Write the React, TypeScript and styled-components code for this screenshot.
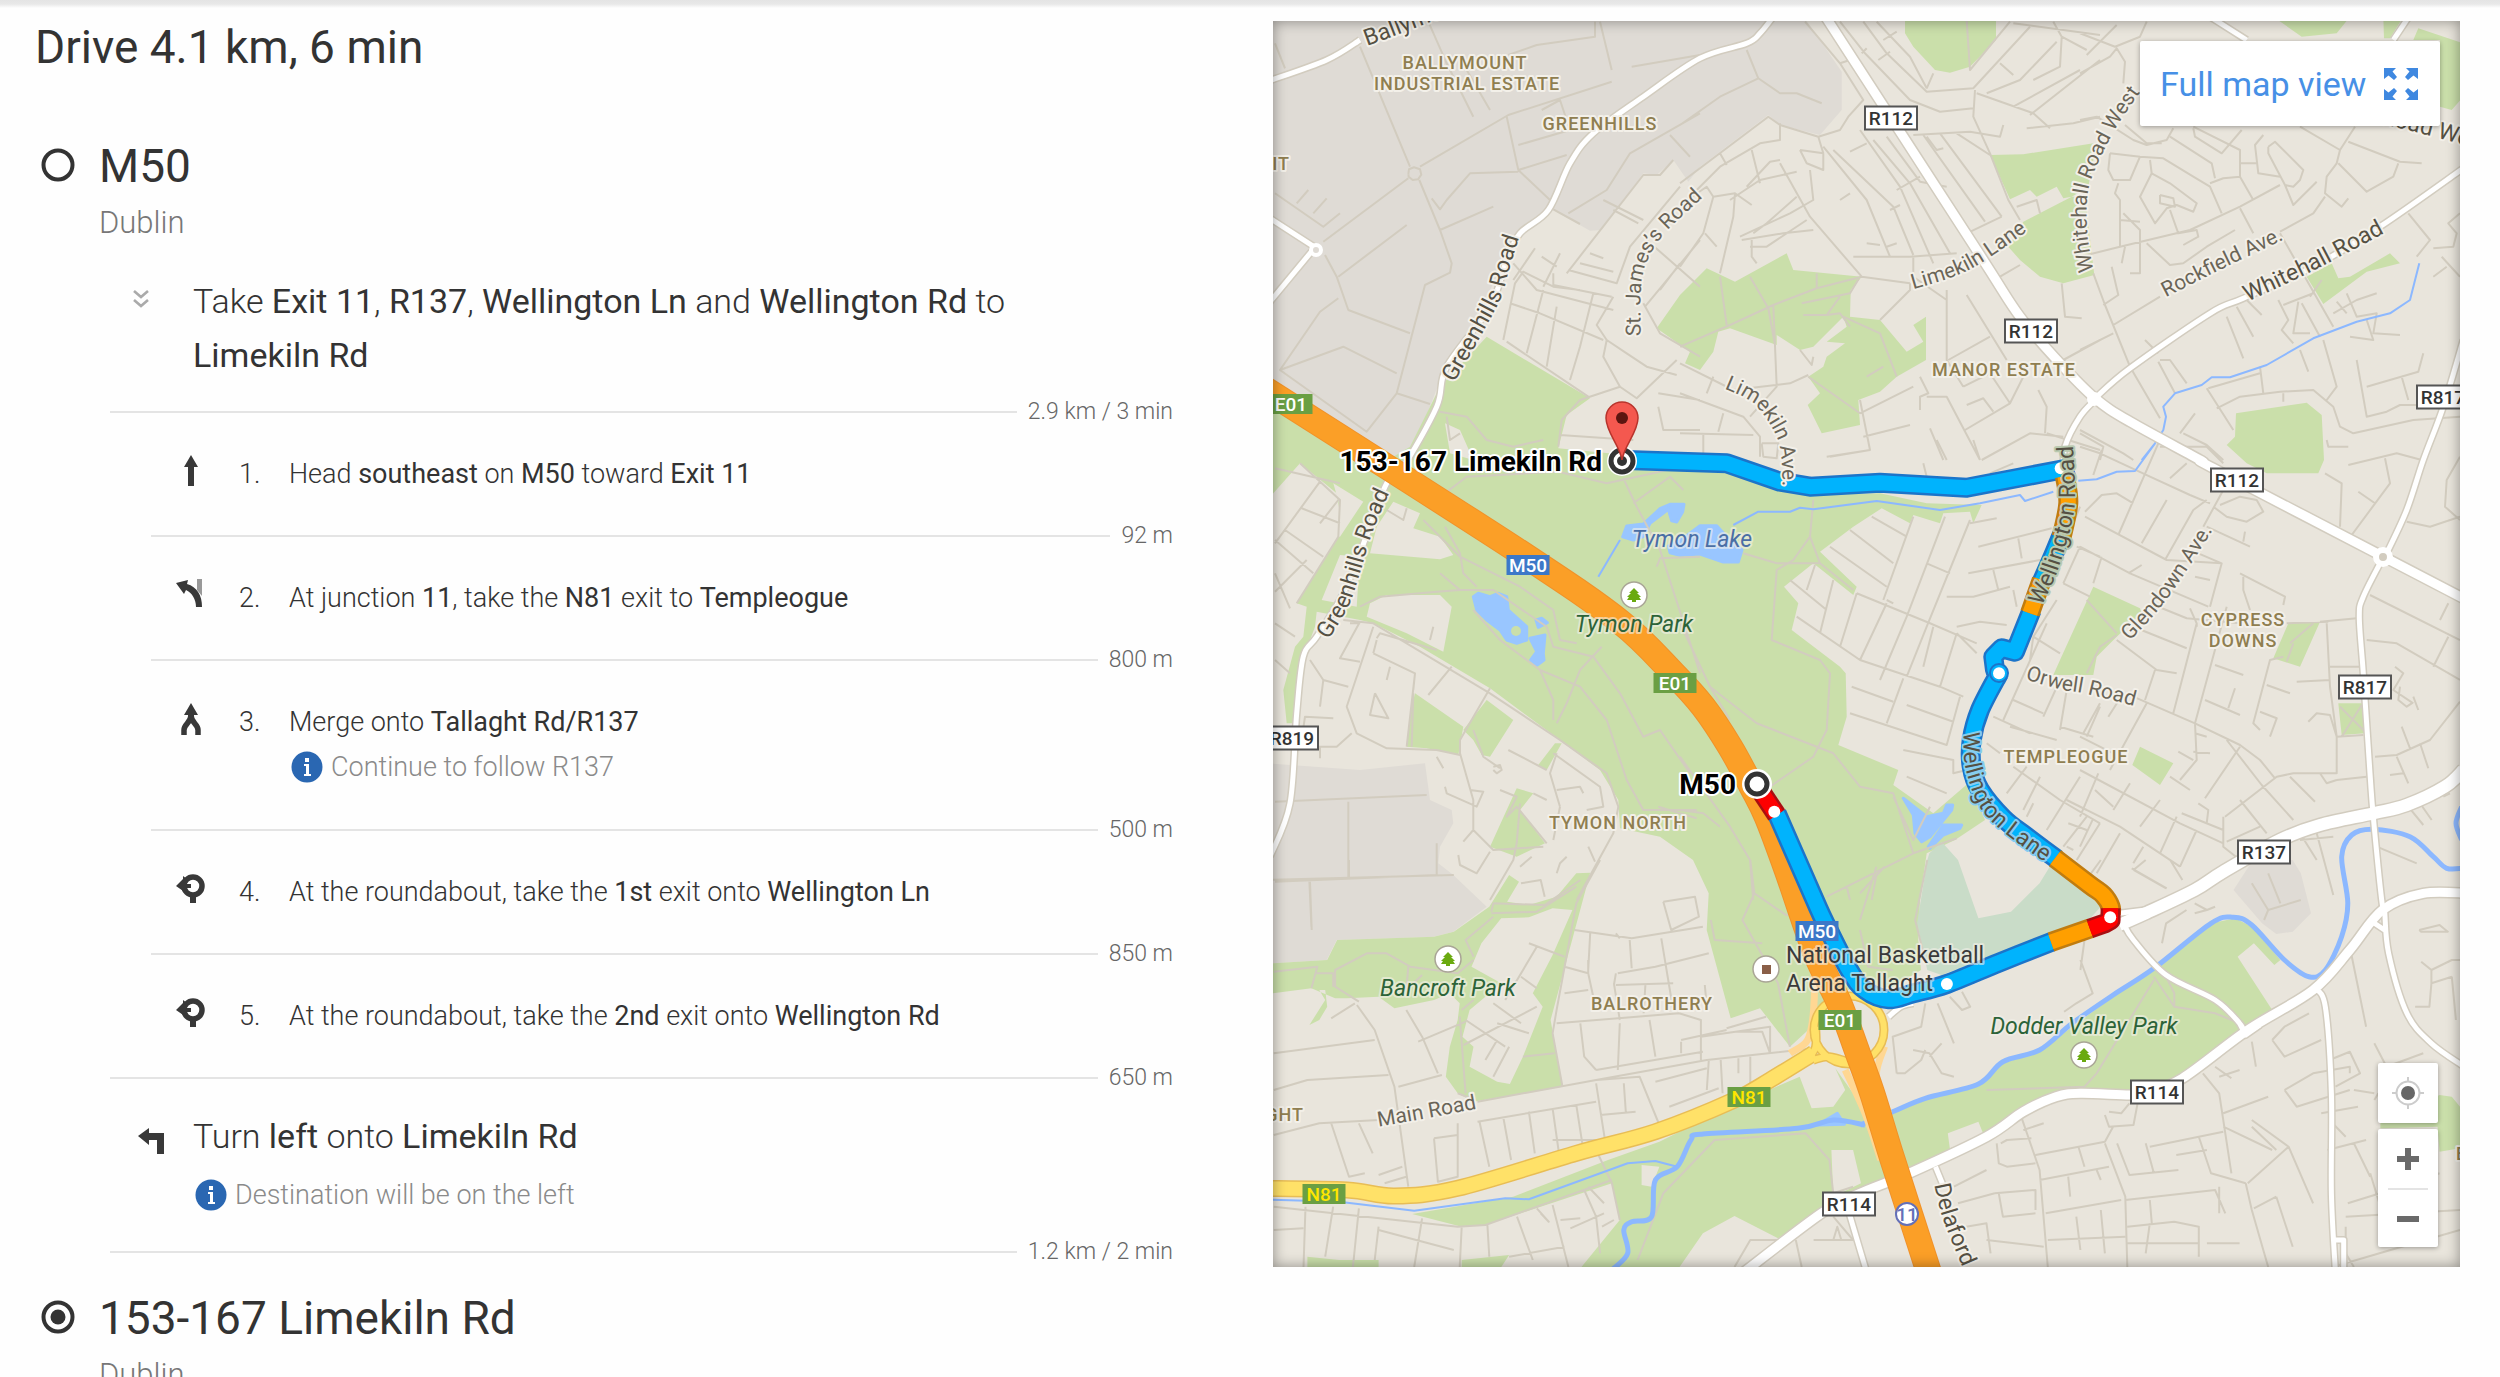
import React from 'react';
import styled, { createGlobalStyle, css } from 'styled-components';

const GlobalStyle = createGlobalStyle`
  * { box-sizing: border-box; }
  body { margin: 0; background: #fefefe; color: #333; font-family: Roboto, "Noto Sans", sans-serif; }
  h1, h2, p, ol { margin: 0; padding: 0; }
  ol { list-style: none; }
`;

/* ---------- layout ---------- */

const Page = styled.main`
  height: 100vh;
  overflow: hidden;
  display: grid;
  grid-template-columns: 1138fr 1187fr;
  align-items: start;
  column-gap: 100px;
  padding: 21px 40px 0 35px;
  background: linear-gradient(#e4e4e4 0, #e8e8e8 4px, #fefefe 8px);
`;

const Directions = styled.section`
  display: flex;
  flex-direction: column;
`;

const Title = styled.h1`
  font-size: 46px;
  line-height: 52px;
  font-weight: 400;
`;

const Waypoint = styled.header<{ $gap: number }>`
  display: grid;
  grid-template-columns: 64px 1fr;
  margin-top: ${(p) => p.$gap}px;
`;

const WaypointName = styled.h2`
  font-size: 46px;
  line-height: 52px;
  font-weight: 400;
`;

const WaypointMark = styled.svg`
  width: 34px;
  height: 34px;
  margin: 8px 0 0 6px;
`;

const WaypointCity = styled.p`
  grid-column: 2;
  font-size: 31px;
  line-height: 40px;
  padding: 11px 0;
  font-weight: 300;
  color: #777;
`;

const Group = styled.div`
  display: grid;
  grid-template-columns: 56px 1fr;
  padding: 18px 180px 24px 102px;
`;

const SummaryGroup = styled(Group)`
  padding: 20px 160px 17px 102px;
`;

const GroupText = styled.p`
  font-size: 34px;
  line-height: 54px;
  font-weight: 300;
  strong { font-weight: 400; }
`;

const Toggle = styled.button`
  width: 16px;
  height: 20px;
  margin: 15px 0 0 -4px;
  padding: 0;
  border: 0;
  background: none;
  svg { display: block; width: 16px; height: 20px; }
`;

const TurnIcon = styled.svg`
  width: 28px;
  height: 28px;
  margin-top: 18px;
`;

const Separator = styled.div<{ $inner?: boolean }>`
  display: flex;
  align-items: center;
  gap: 11px;
  height: 26px;
  padding-left: ${(p) => (p.$inner ? 116 : 75)}px;
  font-size: 23px;
  line-height: 26px;
  font-weight: 300;
  color: #666;
  &::before { content: ''; flex: 1; height: 2px; background: #e4e4e4; }
`;

const Step = styled.li`
  display: grid;
  grid-template-columns: 64px 50px 1fr;
  padding: 30px 0 30px 140px;
  font-size: 27px;
  line-height: 38px;
  font-weight: 300;
  strong { font-weight: 400; }
`;

const StepIcon = styled.svg`
  width: 32px;
  height: 32px;
`;

const Note = styled.p<{ $gap: number }>`
  display: flex;
  align-items: center;
  gap: 8px;
  height: 40px;
  margin-top: ${(p) => p.$gap}px;
  font-size: 27px;
  line-height: 40px;
  font-weight: 300;
  color: #8a8a8a;
  svg { width: 32px; height: 32px; margin-left: 2px; }
`;

/* ---------- map chrome ---------- */

const MapPane = styled.section`
  position: relative;
  aspect-ratio: 1187 / 1246;
  overflow: hidden;
  background: #e9e5dc;
  &::after {
    content: '';
    position: absolute;
    inset: 0;
    pointer-events: none;
    box-shadow: inset 0 0 14px rgba(0, 0, 0, 0.4);
  }
`;

const MapDrawing = styled.svg`
  display: block;
  width: 100%;
  height: 100%;
  font-family: Roboto, sans-serif;
`;

const panel = css`
  background: #fff;
  border: 0;
  border-radius: 2px;
  box-shadow: 0 1px 5px rgba(0, 0, 0, 0.35);
`;

const FullMapButton = styled.button`
  ${panel}
  position: absolute;
  z-index: 1;
  top: 20px;
  right: 20px;
  display: flex;
  align-items: center;
  justify-content: space-between;
  width: 300px;
  height: 85px;
  padding: 0 22px 0 20px;
  font: 400 34px/40px Roboto, sans-serif;
  color: #4790e6;
  svg { width: 34px; height: 32px; }
`;

const Controls = styled.div`
  position: absolute;
  z-index: 1;
  right: 22px;
  bottom: 20px;
  display: flex;
  flex-direction: column;
  gap: 6px;
  width: 60px;
`;

const LocateButton = styled.button`
  ${panel}
  height: 60px;
  padding: 0;
  svg { display: block; width: 34px; height: 34px; margin: 0 auto; }
`;

const ZoomPanel = styled.div`
  ${panel}
  display: flex;
  flex-direction: column;
  align-items: center;
`;

const ZoomButton = styled.button`
  width: 40px;
  height: 59px;
  padding: 0;
  border: 0;
  background: none;
  & + & { border-top: 2px solid #e4e4e4; }
  svg { display: block; width: 24px; height: 24px; margin: 0 auto; }
`;

/* ---------- map geometry ----------
   The survey is stored per sheet: each sheet has an origin and a scale,
   and its coordinates are converted to map units when the module loads. */

type Sheet = [number, number, number, number];
const A: Sheet = [1260, 0, 3, 3];
const B: Sheet = [1680, 0, 3, 3];
const C: Sheet = [2080, 0, 3, 3];
const D: Sheet = [1260, 440, 3, 3];
const E: Sheet = [1680, 440, 3, 3];
const F: Sheet = [2080, 440, 3, 3];
const G: Sheet = [1260, 860, 2.529, 3];
const H: Sheet = [1860, 860, 2.45, 3];

const points = ([ox, oy, sx, sy]: Sheet, d: string) =>
  d.trim().split(/\s+/).map((p) => {
    const [x, y] = p.split(',').map(Number);
    return [Math.round((ox + x / sx) * 10) / 10, Math.round((oy + y / sy) * 10) / 10];
  });

const curve = (pts: number[][]) => {
  let out = `M${pts[0]}`;
  for (let i = 0; i < pts.length - 1; i++) {
    const p0 = pts[i - 1] || pts[i];
    const [p1, p2] = [pts[i], pts[i + 1]];
    const p3 = pts[i + 2] || p2;
    const c1 = [p1[0] + (p2[0] - p0[0]) / 6, p1[1] + (p2[1] - p0[1]) / 6];
    const c2 = [p2[0] - (p3[0] - p1[0]) / 6, p2[1] - (p3[1] - p1[1]) / 6];
    out += `C${c1} ${c2} ${p2}`;
  }
  return out;
};

const poly = (s: Sheet, list: string[]) => list.map((d) => `M${points(s, d).join('L')}Z`).join('');
const lines = (s: Sheet, list: string) =>
  list.trim().split('|').map((d) => `M${points(s, d).join('L')}`).join('');
const join = (...parts: [Sheet, string][]) => curve(parts.flatMap(([s, d]) => points(s, d)));

const industrial =
  poly(A, ['0,62 1640,62 1745,215 1745,330 1680,405 1560,375 1525,345 1320,500 1285,545 1240,480 1190,525 1150,520 1025,690 990,692 880,630 865,640 770,710 690,870 540,1140 480,1300 400,1420 40,1180']) +
  poly(D, ['0,968 300,990 495,970 510,1080 575,1110 580,1150 540,1220 535,1270 580,1305 680,1400 580,1475 520,1490 230,1500 200,1560 0,1572']) +
  poly(H, ['915,90 960,5 1060,0 1080,40 1105,160 1060,215 1020,222 985,190']);

const parks =
  poly(D, [
    '680,-310 990,-125 920,-75 895,25 1100,45 1430,90 1650,165 1860,160 2000,190 2165,195 2140,250 2130,215 2050,220 2040,250 1960,225 1950,250 1865,205 1780,260 1680,335 1790,440 1780,465 1660,370 1572,440 1615,490 1605,530 1595,570 1740,680 1757,700 1760,830 1735,915 1915,990 1900,1035 2020,1120 2130,1025 2175,1140 2085,1200 2000,1240 1980,1380 1975,1500 1983,1590 1900,1640 1750,1650 1655,1760 1590,1820 1500,1705 1412,1735 1340,1470 1346,1360 1299,1260 1200,1190 1080,1165 1075,1080 1020,990 900,900 690,745 480,620 340,550 300,540 170,515 165,560 120,680 110,850 80,850 70,750 105,620 130,590 140,500 110,490 230,300 240,220 230,160 120,70 40,160 0,180 0,-200 400,50 450,20 540,-160',
    '465,760 610,860 595,945 500,925 440,920 455,800',
    '680,780 760,840 690,950 665,945 640,900 610,870',
    '885,910 905,910 860,990 835,975',
    '770,1045 820,1060 780,1110 855,1210 770,1250 690,1220 740,1110',
  ]) +
  poly(G, [
    '0,312 170,300 195,240 440,230 490,215 580,140 630,45 655,65 625,125 680,135 750,110 800,40 835,38 735,480 765,680 540,725 500,700 470,650 480,560 500,480 505,430 480,400 440,420 340,445 300,410 220,415 190,415 130,385 0,405',
    '150,390 165,420 125,495 150,480 170,440 165,390',
    '385,1062 640,1010 880,900 1010,845 1180,745 1365,650 1395,745 1450,740 1480,690 1455,625 1500,700 1580,860 1580,965 1430,1050 1310,1135 1200,1068 1120,1120 1050,1240 800,1240 910,1080 890,970 570,1095 510,1100',
    '120,1190 200,1200 300,1200 300,1240 120,1240',
    '510,1200 630,1185 600,1240 510,1240',
  ]) +
  poly(H, [
    '-20,810 80,760 160,720 300,670 350,610 440,575 520,500 620,410 720,330 860,190 920,175 960,200 1030,300 1015,315 965,250 925,290 1010,450 790,660 660,700 500,690 400,750 310,830 120,935 -20,995',
    '1275,790 1420,705 1450,710 1470,740 1490,860 1420,875 1415,800 1275,805',
  ]) +
  poly(B, [
    '675,50 948,50 948,120 870,200 810,218 765,210 700,140 675,100',
    '930,465 1030,463 1250,428 1225,560 1175,590 1150,595 1130,560 1070,590 1050,570 990,598',
    '1175,590 1215,590 1243,825 1150,850 1080,830 1020,780 985,740 1030,665',
    '80,805 165,845 320,760 340,810 545,830 512,870 510,950 600,960 680,1055 730,1025 700,975 738,950 738,1080 650,1130 600,1175 535,1200 540,1275 425,1300 383,1215 420,1180 385,1130 430,1100 440,1070 495,1030 440,1025 500,980 490,950 400,1040 360,1050 290,1005 290,1035 150,985 115,995 100,1055 60,1110 15,1090 30,1055 -70,985 0,885',
  ]) +
  poly(C, [
    '580,50 810,50 770,100 665,110',
    '910,50 970,50 930,115 912,115',
    '1015,85 1150,130 1150,290 1115,330 1080,320 1080,120 1000,120',
    '680,830 755,790 775,835 810,830 930,760 960,790 860,815 730,912',
    '468,1240 680,1208 725,1245 732,1380 715,1420 560,1420 500,1390 440,1335 465,1310',
  ]) +
  poly(F, [
    '40,440 180,505 185,520 110,590 50,650 40,705 -80,705 -60,660',
    '625,550 720,545 660,680 580,655',
    '775,790 850,790 855,880 785,885',
    '180,920 280,970 240,1035 157,975',
  ]);

const clearings =
  poly(D, [
    '220,130 310,185 240,290 200,290 240,200',
    '240,345 300,350 290,500 185,480',
    '400,185 480,220 460,265 540,290 580,345 540,358 330,340 350,260',
    '320,530 330,490 380,465 540,465 575,500 550,635 440,580',
    '555,-50 600,-30 640,60 570,40',
  ]) +
  poly(G, [
    '610,175 680,172 740,145 790,150 740,285 690,400 715,440 665,590 632,672 600,665 530,620 540,560 512,530 530,450 570,410 610,370 535,320 560,250',
    '965,915 1010,920 990,980 965,975',
    '1445,870 1500,870 1520,970 1450,1010',
  ]) +
  poly(H, ['215,820 290,785 305,830 220,865']);

const golf = poly(H, ['165,0 170,-20 200,-55 240,0 290,175 370,155 440,70 475,0 590,140 560,180 200,345 165,330 140,190']);

const lakes =
  poly(D, [
    '640,470 655,460 690,470 715,460 740,470 745,510 800,560 800,600 770,610 740,600 720,570 680,540 650,510',
    '828,540 845,535 862,548 835,562',
    '810,595 855,585 850,640 852,660 832,675 812,660 830,635',
    '1088,290 1100,258 1150,252 1200,206 1230,193 1272,193 1268,215 1250,246 1235,242 1225,208 1170,250 1150,290 1120,300',
  ]) +
  poly(E, [
    '-35,318 10,295 60,257 110,257 140,290 186,330 175,366 130,366 60,342 0,346 -30,338',
    '670,1075 740,1130 790,1120 800,1095 818,1095 815,1110 750,1190 725,1205 705,1180 700,1125',
    '745,1220 790,1155 845,1155 840,1165 790,1185 750,1225',
  ]) +
  poly(G, ['1410,795 1460,760 1478,793']);

const streams =
  lines(E, '160,255 235,215 330,215 360,203 400,208 590,183 780,210 900,190 1020,165 1035,183 1120,155 | 1195,122 1250,118 1310,95 1365,93 1425,10') +
  lines(C, '185,1380 225,1330 250,1290 258,1250 250,1220 285,1180 365,1155 395,1132 450,1132 560,1095 700,1015 830,965 930,940 990,900 1018,790') +
  lines(D, '1015,410 1080,300') +
  lines(G, '0,1018 200,1025 390,1052 620,1015 680,1018 930,910 1000,903 1055,920');

const rivers = [
  join([G, '890,1230 930,1180 920,1110 940,1085 990,1070 1000,960 1055,920 1090,840 1120,822 1360,805 1450,780 1530,795']),
  join([H, '0,795 80,755 160,715 290,672 350,605 440,570 520,490 620,405 720,325 860,190 915,172 960,195 1040,300 1100,350 1140,330 1180,230 1195,130'], [F, '785,1250 815,1185 880,1168 990,1190 1060,1250 1100,1285 1150,1285']),
  join([F, '1145,1100 1128,1150 1145,1200']),
].join('');

const streets =
  lines(A, '300,140 450,500|480,500 745,345 1055,245|445,535 190,725|478,540 540,690 575,790 570,818 495,855 410,1180 510,1212|195,765 230,830 265,930 450,1000|45,130 75,205|505,65 560,190 640,350|620,210 690,330|745,165 830,135 1005,110 1005,65|1020,65 1055,210|740,350 775,510 870,600|775,515 630,520 560,600 540,628 515,595|540,690 700,620|440,675 235,830|235,895 180,935 60,1110 320,1295 410,1180|60,1110 250,1040 410,1120|45,580 190,680 240,640|110,610 145,570|160,640 200,595|775,435 930,390 900,300 845,330|775,510 920,465|1115,200 1320,165|1230,405 1290,470|925,640 1040,570 1110,460 1320,340|1030,600 1150,660|880,628 960,672|920,820 1150,525 1200,525 1240,480|1060,630 1135,670|925,810 1070,850 1110,740 1260,560|960,790 1060,815|990,760 1030,775|760,790 830,870 1060,930|760,840 825,745|850,860 900,760|845,770 890,800|880,820 880,855 1055,890|730,1020 765,850 790,815 880,860 960,870|750,910 840,940|800,1060 850,870|860,1100 880,980 890,920|930,1140 960,1040 1000,880|840,940 1030,1020|1060,890 1010,975 1040,1020 1100,1060 1160,1100 1250,1125|1040,1020 1030,1070 1080,1160 1130,1195 1250,1080|1080,1160 960,1200 905,1260 895,1340|740,1025 985,1190|900,1305 1120,1320|1150,910 1200,1000 1320,1070|1155,920 1320,720|1200,870 1260,790|1160,720 1320,860|1195,1180 1320,1200|1195,1220 1210,1290 1320,1290|540,1235 620,1250 680,1320 760,1340 850,1320|560,1250 570,1320 600,1300') +
  lines(A, '445,522 447,508 462,502 480,508 484,524 474,538 458,540 446,530 445,522') +
  lines(B, '375,65 480,190 550,300 505,350 480,390 415,410|480,65 555,160 690,300 780,335 880,325|550,65 620,160 740,275 880,265 1050,80|590,65 690,170 740,265|480,190 510,180|545,160 560,145|595,180 630,155|610,120 650,95|885,270 880,350 930,460 985,600 1020,660|890,280 1060,340 1110,385|970,375 960,410 870,395 700,405|1040,385 1180,370 1260,350|1000,320 1200,210|1050,345 1260,180|920,280 1020,240 1130,125|960,190 1000,225|1145,110 1140,200 1060,240|1000,70 1260,105|1120,65 1145,110 1220,150|990,65 870,210 860,62|760,220 740,265|0,375 120,290 235,235 200,150|235,235 300,280 350,280 425,310|0,550 265,350 300,375 415,410 430,460|300,370 300,420 240,430 120,500 0,620|0,615 80,560 100,590 70,700 0,800|120,460 140,495|215,450 240,550|360,450 430,460 430,510 380,490 360,450|150,600 240,540 350,515|165,580 160,650 120,820|75,700 110,740|100,590 165,580 215,615|300,490 390,650 545,830|180,710 330,640 400,600 390,510|210,740 260,740 380,660|215,720 215,770 230,790|220,700 260,670 350,590|300,480 270,485 200,560|185,720 310,700 400,690|430,440 560,600 630,770|460,450 640,620 700,765|510,455 560,430|540,390 660,560 760,790|580,420 690,550 810,760|620,410 720,545 800,560|520,770 690,770 830,760|545,830 690,850|480,600 510,580|630,630 660,615|650,570 720,530|560,730 600,735|620,740 650,730|730,405 915,665|780,400 965,650|830,400 930,465|860,700 965,650|740,410 770,450 790,445|210,830 265,925 285,1035|0,1040 150,975 280,915 410,865 545,830|410,820 410,865|140,975 120,830|280,915 290,1160 210,1250|365,910 510,880 540,830|370,945 440,945 480,890|440,945 480,940 510,980|490,950 600,1000 650,1130|360,1050 395,1095 400,1070|560,1130 610,1100|385,1130 540,1240|550,1310 690,1275|540,1240 700,1160|540,1200 570,1350 450,1370|0,1090 160,1170 330,1150 385,1125|0,1180 190,1250 240,1310 240,1370|80,1180 100,1130|0,1300 220,1305|115,1295 130,1240|70,1300 70,1380|245,1330 295,1330 290,1375 250,1370 245,1330|690,850 690,870 600,960|800,870 800,1080 850,1160|860,885 980,1080|805,1080 930,1010|700,770 700,830 800,900|960,830 1020,795|1145,850 1155,950 1205,955|850,1160 950,1110|740,1190 800,1190 900,1380|720,1230 720,1190 745,1180 720,1130|860,1215 910,1195 940,1235|855,1290 990,1210 1040,1110|910,1090 990,1210|1100,1300 1260,1350|905,1380 1050,1300 1150,1310|750,1285 790,1380|1075,1170 1100,1220 1095,1300|1150,1080 1260,1020|1010,620 1070,600 1080,640') +
  lines(C, '0,100 105,140 180,110 200,65|20,165 110,75|0,220 90,170 110,145 135,185 130,250|0,360 50,350 160,420 200,435 260,420 280,385|135,375 200,430 245,430|270,410 395,490 405,535|340,385 345,410 425,460 485,390|340,380 480,450 480,530|660,380 780,450 770,490 740,530 735,580 785,620 805,595|780,450 825,380|805,425 960,485 1025,490|775,490 860,575 940,530 955,490|565,440 585,425 670,510 660,540 640,560 615,555 565,460 565,440|550,405 525,435 535,520 600,530|480,490 530,490|90,460 180,470 250,475 340,530 390,560 425,640|180,470 150,540 100,540 85,510 90,460|390,550 430,535 480,530 520,600|210,480 215,520 180,590 225,670 260,625 290,615 340,635 350,610 270,550 215,520|240,585 280,595 285,620 240,610 240,585|270,630 295,700 350,690 355,710 310,735|0,770 120,740 330,690 480,620 600,555|120,740 120,600 105,580 115,550|130,640 180,690 180,820 150,820|480,625 520,700|200,730 270,795 310,790 380,740 465,690|125,790 135,740|120,660 180,665|600,700 760,980|600,695 700,640 735,590|615,555 640,615 710,545|40,820 75,915 150,1100 240,1255|70,915 115,885 95,800|100,975 240,890|0,1050 100,1000|440,950 490,1075|470,920 520,1010|500,900 545,945|595,900 625,960 605,990 640,1030|655,905 640,1000 690,1000|610,915 700,880|665,910 720,1010|730,1020 770,1160 740,1200|660,1050 685,1115|540,1100 550,1180|380,1165 460,1290|385,1165 540,1120|410,1225 480,1190 600,1175 700,1170 760,1220 780,1280 820,1300 1000,1260 1140,1250|235,1085 285,1180|240,1080 270,1080 320,1150|195,1020 235,1060|610,1180 610,1205|760,940 830,900 890,880|800,880 830,950 890,940 880,1000 960,1005|770,905 800,940|860,960 880,1020 810,1010|830,1080 860,1250 920,1235 960,1215 1010,1215|860,1160 1015,1115 1030,1060|965,1130 985,1200|985,640 1050,720 1010,770|1140,640 1105,670 1130,700 1120,740 1060,745|1085,770 1140,830|1060,830 1100,800|725,840 690,890|0,1290 130,1360 160,1380|60,1380 70,1340 0,1300|300,1300 345,1240|310,1300 380,1335 430,1380') +
  lines(D, '45,85 240,130|120,70 240,180 235,290 110,490|180,125 45,310|75,270 190,350|45,455 140,360|235,180 180,250|125,205 240,250|45,400 90,505|45,300 160,400|45,660 90,700|45,550 105,590|380,210 430,240 440,205|250,540 340,550 690,760 900,900 1040,1000 1075,1100 1060,1180 950,1380|300,545 240,655 300,665|270,550 300,550|340,560 260,800 290,880 380,925 530,930|150,660 190,720 265,740|190,720 180,800|340,640 465,700 440,920|390,680 380,720|465,700 460,750|350,595 360,580 530,630|340,640 350,600|575,680 505,765|690,745 600,900 600,940 640,1080 640,1170 700,1230 850,1220|460,760 455,920|530,930 600,945|130,865 135,830 220,835|100,920 230,920 275,880|180,920 180,955|345,760 385,835 330,825 345,760|550,985 530,950|555,1040 560,1060 650,1100 670,1055 630,1050|610,1205 640,1170|595,1245 600,1275 650,1300 690,1235|640,870 670,950 720,985|745,930 860,990|700,980 720,975 725,990 710,1000 700,990|720,1050 770,1070 740,1130 770,1100 860,1210|780,1090 770,1210 760,1260 690,1380|890,940 870,1000 900,1100|880,940 1020,1040 1030,1100 980,1110|890,1050 960,1040 970,1060|780,1280 815,1250|890,1300 900,1270 920,1250|985,1220 1005,1265|820,1060 860,1080|900,1100 880,1200|540,400 600,450 530,455 360,470 300,500|600,450 700,450 860,560 880,620 1000,650 1080,760 1150,890 1200,870 1290,1000|555,260 600,340 610,400 650,440|555,160 620,110 895,95 1040,130 1180,100 1300,70|490,240 600,350 780,440 880,510 900,600 950,610|640,510 720,600 840,690 880,780 880,840|840,690 960,740 1040,840 1100,1020 1150,1110 1310,1110|1025,620 960,690 920,790 890,850|1090,115 1130,200 1200,330 1320,700|1120,190 1230,110 1270,150|1190,380 1200,355 1320,350|520,560 510,600|45,1085 500,1065|265,1085 265,1310|45,1325 530,1305 530,1210|150,1325 155,1470|1195,1100 1310,1135') +
  lines(E, '400,180 390,290 340,360 290,390 275,600 420,660 450,700 440,870 400,950 270,1040|390,290 420,370 520,450|190,340 290,370 420,370|0,550 90,740 230,850 460,940 540,1040 640,1060 700,1240|90,740 150,840|0,950 150,1160 210,1260 220,1380|440,1370 700,1240 830,1195|590,1300 575,1380|500,1340 510,1380|0,1110 70,1120 120,1160|330,420 440,510|350,530 540,660 780,740 850,770|405,375 380,450|460,420 420,580|530,460 480,620|620,490 540,660|510,270 640,370|575,230 680,290|450,320 620,440|700,230 610,480|795,230 680,530 600,720|740,370 810,400|870,240 740,560 680,710|530,460 750,550 890,610|620,480 640,490|760,560 730,680|830,580 780,740|830,580 890,640|830,560 900,545 980,555|800,470 880,470 990,440|870,250 950,235|895,320 1115,265|1015,295 1025,355|865,400 1080,360|940,390 955,450|1000,450 1010,500|510,820 800,915 840,770|515,740 640,785|670,715 620,850|680,795 820,845|670,930 820,960 820,1000 860,990|680,1010 800,1060|640,1070 700,1200 750,1100|440,50 570,30|930,100 1000,70|730,70 740,110|800,60 770,0|900,60 880,0|1150,430 1230,470|1130,480 1060,590 1140,640|1200,320 1150,430|1200,200 1180,250|1190,320 1260,350|970,840 1100,550|1000,780 1090,820|1050,880 940,830|1090,830 1140,720|1140,860 1240,890|1140,870 1160,750|1220,890 1260,800|1060,590 1050,660|990,860 1130,900|920,910 960,940|1000,980 1140,1080 1260,1150|980,1060 1040,980|1030,1110 1080,1010|1100,1170 1200,1010|1160,1080 1220,1110|1165,1150 1220,1170|1150,1220 1220,1130|1160,1220 1180,1230|1190,1260 1260,1150|1060,1090 1040,1130') +
  lines(F, '0,20 60,40 210,110 330,165 390,190|40,105 65,30|115,285 235,10|185,310 260,180|255,360 340,210 380,180|15,215 65,165 110,160 160,190|15,230 260,360 425,370|270,115 320,70|240,20 380,20 430,70|430,150 370,260|400,200 440,230 500,245 550,215 530,180 480,170 420,195|380,260 510,320|490,305 495,275|355,340 425,370 390,500|0,320 150,400 385,500|145,400 185,375|40,430 65,350|345,410 390,420|480,400 615,470 610,495|490,410 490,450 510,510|160,560 320,625|110,600 230,690 290,700|350,550 280,820|330,505 350,550 350,560|440,500 345,850|235,500 320,535 480,550|405,675 490,705|225,690 195,780|375,780 480,825|445,805 465,745|160,770 345,850 480,915 540,960 585,1015|560,735 630,760|610,650 570,660 520,850 540,870|540,815 590,835 570,890|0,890 100,940|60,790 10,880|200,790 90,990|345,850 350,960 300,1020|345,880 380,890|340,935 390,940|480,920 375,1075|440,900 545,1035|435,1130 590,1010 640,1000 770,1000 770,890 750,740 740,550|480,1080 560,1180|545,1035 640,1140|630,1010 705,1085|270,1010 330,1050|295,935 340,960|720,1000 740,1030 770,1020|770,1020 860,1010|685,845 710,820 750,825 770,890 850,885|650,725 750,720|750,680 850,680|720,545 830,535|620,550 745,545|870,465 1140,600|1105,490 1080,540|860,600 950,610 1140,720|1105,590 1060,680|945,680 970,700 940,750 1000,790|960,740 955,780 980,800 995,790|1000,770 1015,810|885,950 950,945 1050,900 1140,785|965,860 990,925|1020,910 1045,985|950,950 985,1030|930,1005 970,1000|805,75 950,40 1025,60|915,55 930,130 815,285|835,155 885,190|735,100 785,130 780,260|980,245 1050,260 1140,230|1140,50 1100,120 1095,200 1140,240|740,0 745,20 805,20|0,990 300,1150 430,1210|0,1100 120,1160 300,1280|55,1000 0,1130|45,1050 100,1100|100,1110 150,1030|180,1160 240,1080|240,1240 290,1130|300,1280 350,1170|120,1180 50,1300|40,1135 0,1220|160,1270 190,1220|155,1285 260,1345|305,1120 430,1170|355,1090 385,1110 380,1150|430,1130 430,1220 480,1260|440,1205 540,1160|660,1180 710,1260|660,1200 760,1190|710,1180 760,1365|890,1220 1010,1270|1090,1070 1110,1060|1020,1090 1055,1140|985,1100 1030,1155|85,830 130,760|785,890 845,795|780,800 855,875|630,610 700,550|620,665 640,610|20,480 110,580|20,700 60,620 110,585') +
  lines(G, '0,60 490,45|225,0 225,50|125,65 130,200|35,580 290,540|35,690 120,660 325,645|245,435 290,510 340,680 375,980|370,450 410,530 450,640|400,545 520,485|350,680 460,645|35,825 150,790 300,780|180,790 225,950 265,940|250,790 285,880|240,430 180,475|300,945 360,920|315,970 370,950|550,785 850,725|440,835 500,825 500,950 450,965 440,835|500,790 500,830|555,785 580,920|615,770 635,900|680,755 695,880|740,745 755,870|800,735 815,850|850,670 875,860|740,840 860,840|860,765 950,755|920,670 925,755|850,660 960,650 1010,795|1000,665 1130,625|1035,740 1160,685|1135,600 1130,690|1165,600 1170,700|1210,595 1210,640|1240,590 1240,670|550,725 850,660 1130,600 1400,565|850,630 1120,575|545,720 500,700|795,210 940,235 1120,200|835,220 830,330|935,240 940,325|900,220 910,235|1015,235 1045,450|770,320 830,340 830,300|770,400 830,390|830,340 850,450|905,340 1000,320 1135,280|895,375 900,340|900,375 1045,370|895,370 910,480|975,370 970,460|750,490 1060,460|810,490 820,590 850,630|910,490 905,630|985,480 1000,590|1060,460 1115,480 1115,600|1065,540 1180,510|1065,580 1065,545|1115,530 1290,500 1290,580|1180,505 1280,470|1200,515 1270,515 1290,580|1125,375 1130,440|1020,125 1100,110 1110,170 1040,210 1020,125|860,0 800,130 750,450 740,520 765,680|585,160 700,155 800,80|585,155 590,130 720,135 810,60|660,70 710,60 720,110|540,300 500,340 380,320 320,280 270,280 190,330 190,380 250,425|130,385 145,320 35,335|140,340 185,340 185,380|590,170 520,240 540,290|375,320 370,390 410,345|680,250 770,290|700,260 620,420|660,350 700,385|590,430 660,490|515,555 700,440|520,480 620,560|600,540 570,600|600,490 680,520|630,560 590,650|665,590 745,580|505,470 520,700|540,420 510,450|850,870 890,970 910,1080|35,1040 500,1100 570,1095 890,960|115,1040 110,1221|185,1040 165,1190|250,1045 235,1221|35,1110 110,1105|410,1075 390,1221|300,1110 490,1170|300,1100 290,1200|510,1100 505,1221|575,1095 580,1190|650,1070 690,1200|740,1035 780,1221|700,1045 730,1085 710,1060|760,1080 810,1075|785,1105 870,1060|820,990 850,1070 860,1180|865,1100 895,1080|870,1030 830,980|630,1190 770,1160|955,1200 1020,1000 1150,840 1380,820 1440,900 1450,1000 1500,980|1240,0 1250,100 1220,180 1310,370 1340,560|1250,100 1330,165 1360,160|1140,180 1150,240 1270,250|1200,1221 1240,1140 1310,1140|1450,1070 1500,1140 1400,1140|1450,1140 1460,1100 1470,1140|1355,1140 1370,1221') +
  lines(H, '165,0 135,180 160,300|0,180 40,20|0,210 20,320 80,330|0,100 60,20|395,770 440,930 460,1221|400,810 450,790|430,885 600,845 620,800|440,960 610,920|510,950 515,1010|580,930 590,960|535,860 550,920|600,850 650,1010 655,1221|630,850 660,945 780,930|700,850 720,940|710,860 830,830 890,815|775,885 850,870|830,830 860,940 945,970|840,640 880,700 910,940|890,760 1000,710|950,970 1050,860 1110,1030|960,800 1020,870|945,970 960,1050 1000,1221|965,1045 1020,1010|1010,870 890,800|1050,860 960,780|1020,1010 1060,1160|455,1060 640,1020|530,1070 540,1170|460,1140 650,1130|590,1050 600,1180|710,1020 715,1090|650,1020 870,990 895,1060|880,980 880,1060|655,1100 770,1085 830,1100 830,1190|710,1090 700,1180|655,1150 830,1150|850,1150 930,1150|330,1000 430,990 430,1050|340,1000 350,1070 430,1060|240,1030 330,1000|230,980 310,930|260,1100 310,1090 320,1180|310,1140 450,1160|335,850 340,910 360,920 430,910|345,850 360,840 420,835|600,765 610,800 670,795 680,730|610,755 640,760 660,730|1010,540 1040,500 1100,460|1010,540 1040,590 1130,540|1040,690 1110,640 1200,620 1200,640|1040,690 1070,740 1200,690|960,545 970,620|870,620 910,655|880,650 930,630|1150,600 1200,575 1225,640 1165,680|1200,260 1240,500|1130,760 1220,740|1145,870 1240,840|1210,850 1250,950|1195,1030 1300,990 1420,940|1190,1070 1470,1050|1190,1100 1190,1180 1210,1221|1160,1220 1300,1170 1470,1110|1250,940 1280,1060|1150,780 1190,830|1260,550 1290,620 1380,580|1370,210 1420,195 1440,215 1375,215 1370,210|1375,305 1400,330 1400,370 1450,350|1400,330 1450,300 1470,300|1400,370 1395,440 1360,440|1450,350 1460,480|1210,690 1260,700|1260,720 1270,700|750,350 770,400 770,440 870,460 930,490|720,350 770,440|720,360 580,640 550,680 310,690|540,300 570,400 530,430 500,455|550,240 540,330|220,410 250,450 270,440 250,395|190,430 230,550|160,430 150,500 80,530 90,640|130,570 170,580 200,640 230,650|170,590 200,550|160,570 150,600 110,640 90,640|670,30 750,85|740,250 750,190 800,150|820,130 850,150 820,160|850,150 870,140|590,0 560,50|760,0 790,60|700,0 670,30|960,70 1000,150 1080,120|1000,150 990,180|1000,40 1030,130');

const localRoads = [
  join([A, '20,245 200,180 300,120']),
  join([B, '280,50 240,100 200,130 60,175 -110,290 -260,400 -330,490 -395,630 -480,700 -520,780 -570,920 -700,1100 -730,1220 -830,1400'], [D, '380,130 330,260 250,460 170,590 130,650 110,820 90,1090 30,1250']),
  lines(A, '30,655 165,742 30,905'),
  join([C, '45,1195 150,1105 390,940 490,895 700,800 900,680 1150,505']),
  lines(C, '390,50 500,120|990,45 940,120'),
  join([B, '1245,1200 1200,1250 1155,1340 1150,1420']),
  join([C, '1150,1020 1090,1220 1030,1380'], [F, '980,210 920,340']),
  join([F, '900,370 850,470 838,530 850,700 870,1000 880,1130 905,1380'], [H, '1285,150 1295,280 1340,460 1400,550 1480,620']),
  join([H, '645,190 670,240 750,345 870,420 930,490 940,515']),
  join([H, '1115,385 1140,440 1155,700 1155,1000 1165,1240']),
  lines(H, '1165,1140 1185,1140 1185,1240|185,920 205,980|1255,185 1285,210'),
  lines(G, '1490,1060 1535,1240'),
  join([H, '70,470 100,440 130,430']),
  lines(H, '930,490 945,525 980,495'),
  lines(H, '635,160 700,150'),
].join('');

const mainRoads = [
  join([B, '430,40 890,750 1020,950 1140,1090 1245,1195'], [C, '150,1265 360,1380'], [F, '400,85 910,350 1150,475']),
  join([H, '1490,100 1380,100 1280,150 1200,270 1110,390 950,510 790,655 700,700 660,705 540,700 480,710 400,755 310,830 120,940 0,1000'], [G, '1420,1060 1220,1240']),
].join('');

const r137 = join([F, '1150,990 1095,1040 980,1095 880,1120 720,1155 600,1200 430,1295'], [H, '820,90 700,160 635,195']);

const n81 = join([G, '0,985 220,990 340,1008 500,985 800,880 1000,815 1200,720 1290,660 1400,580']);
const interchange =
  join([G, '1400,600 1440,590 1500,610']) + 'M1814,1030a35,34 0 1,0 70,0a35,34 0 1,0 -70,0' + join([G, '1385,600 1405,560 1405,500']);
const slipRoads = join([E, '235,1090 300,1290'], [G, '1380,200 1400,320 1400,450 1385,540 1340,580']) + join([G, '1480,630 1530,760 1570,900']) + join([H, '60,560 40,650 70,760']);
const motorway = join([D, '-20,-175 255,0 800,350 1080,545 1240,700 1330,800'], [E, '150,920 215,1040 260,1130 320,1290'], [G, '1405,280 1465,430 1515,590'], [H, '30,700 80,900 175,1260']);

type Leg = { kind: 'clear' | 'slow' | 'jam'; d: string };
const legs: Leg[] = [
  { kind: 'clear', d: lines(E, '-160,60 0,65 140,70 300,125 390,140 600,128 860,143 1150,88 1160,115') },
  { kind: 'clear', d: join([E, '1145,285 1118,350 1085,425']) },
  { kind: 'clear', d: lines(E, '1055,510 1005,635 965,625 940,650 945,690 957,700') + join([E, '957,700 900,810 875,900 875,980 900,1050 970,1135 1040,1190 1130,1258']) },
  { kind: 'clear', d: join([E, '290,1120 400,1370'], [G, '1430,190 1490,330 1530,390 1590,418'], [H, '130,400 213,372 340,308 470,245']) },
  { kind: 'slow', d: join([E, '1155,110 1165,190 1145,290']) },
  { kind: 'slow', d: join([E, '1085,420 1050,520']) },
  { kind: 'slow', d: join([E, '1125,1255 1230,1335'], [H, '596,105 614,140 614,165']) },
  { kind: 'slow', d: lines(H, '468,246 565,205') },
  { kind: 'jam', d: lines(H, '563,206 600,190 614,180 614,145') },
  { kind: 'jam', d: lines(E, '230,1035 290,1125') },
];
const legColours = { clear: ['#1c74c9', '#00b3fd'], slow: ['#c07c10', '#ff9f00'], jam: ['#a80f12', '#fe0000'] };

const stops = [...points(E, '283,1115 957,700 1142,85'), ...points(H, '613,172 213,372')];

const MapLines = styled.path<{ $colour: string; $width: number }>`
  fill: none;
  stroke: ${(p) => p.$colour};
  stroke-width: ${(p) => p.$width};
  stroke-linejoin: round;
`;

const halo = css`
  paint-order: stroke;
  stroke: #f3f0e9;
  stroke-width: 4px;
  stroke-linejoin: round;
`;

const AreaLabel = styled.text<{ $anchor?: string }>`
  ${halo}
  font-size: 18px;
  font-weight: 500;
  letter-spacing: 1px;
  fill: #8f7e50;
  text-anchor: ${(p) => p.$anchor || 'middle'};
`;

const RoadLabel = styled.text<{ $tint?: string; $major?: boolean }>`
  ${halo}
  stroke: ${(p) => p.$tint || '#f3f0e9'};
  font-size: ${(p) => (p.$major ? 23 : 21)}px;
  fill: ${(p) => (p.$major ? '#555043' : '#6a6558')};
`;

const PlaceLabel = styled.text<{ $colour: string; $italic?: boolean }>`
  ${halo}
  stroke-opacity: 0.6;
  font-size: 23px;
  font-style: ${(p) => (p.$italic ? 'italic' : 'normal')};
  fill: ${(p) => p.$colour};
  text-anchor: ${(p) => (p.$italic ? 'middle' : 'start')};
`;

const StopLabel = styled.text`
  ${halo}
  stroke: #fff;
  font-size: 28px;
  font-weight: 700;
  fill: #000;
  text-anchor: end;
`;

const ShieldText = styled.text<{ $colour: string }>`
  font-size: 19px;
  font-weight: 500;
  fill: ${(p) => p.$colour};
  text-anchor: middle;
`;

const areaLabels: [number, number, string, string?][] = [
  [1465, 69, 'BALLYMOUNT'], [1467, 90, 'INDUSTRIAL ESTATE'], [1600, 130, 'GREENHILLS'], [1290, 170, 'IT', 'end'],
  [2004, 376, 'MANOR ESTATE'], [1618, 829, 'TYMON NORTH'], [2066, 763, 'TEMPLEOGUE'], [2243, 626, 'CYPRESS'],
  [2243, 647, 'DOWNS'], [1652, 1010, 'BALROTHERY'], [1304, 1121, 'GHT', 'end'], [2456, 1160, 'E', 'start'],
];

const roadLabels: { text: string; d: string; tint?: string; major?: boolean }[] = [
  { text: 'Greenhills Road', major: true, d: join([A, '582,1148 640,1048 720,900 750,800 790,670']) },
  { text: 'Greenhills Road', major: true, d: join([D, '205,600 265,500 300,400 340,270 410,110']) },
  { text: 'St. James’s Road', d: join([A, '1142,1008 1142,890 1155,800 1210,705 1330,590 1400,520']) },
  { text: 'Ballymount', major: true, d: join([A, '322,138 410,105 680,0']) },
  { text: 'Limekiln Lane', d: join([B, '700,868 820,830 910,785 1060,680']) },
  { text: 'Limekiln Ave.', d: join([B, '133,1165 220,1210 280,1290 302,1360 310,1500']) },
  { text: 'Whitehall Road West', d: join([C, '40,812 22,700 22,590 45,510 110,380 200,250']) },
  { text: 'Rockfield Ave.', d: join([C, '258,892 430,805 640,705']) },
  { text: 'Whitehall Road', major: true, d: join([C, '503,905 700,812 940,685']) },
  { text: 'Road West', major: true, d: join([C, '900,370 1060,410 1240,460']) },
  { text: 'Wellington Road', major: true, d: join([E, '1085,498 1130,400 1175,250 1185,150 1175,-40']), tint: '#b9c9b0' },
  { text: 'Wellington Lane', major: true, d: join([E, '850,876 860,1000 930,1140 1150,1305']), tint: '#86cdf0' },
  { text: 'Glendown Ave.', d: join([F, '150,603 270,465 440,205']) },
  { text: 'Orwell Road', d: join([F, '-165,718 -60,748 20,762 190,805']) },
  { text: 'Main Road', d: join([G, '300,800 420,775 600,735']) },
  { text: 'Delaford', major: true, d: join([H, '182,975 207,1090 275,1290']) },
];

const shields: [number, number, string, 'r' | 'e' | 'm' | 'n'][] = [
  [1891, 118, 'R112', 'r'], [2031, 331, 'R112', 'r'], [2237, 480, 'R112', 'r'], [2365, 687, 'R817', 'r'],
  [2264, 852, 'R137', 'r'], [2443, 397, 'R817', 'r'], [1292, 738, 'R819', 'r'], [2157, 1092, 'R114', 'r'],
  [1849, 1204, 'R114', 'r'], [1291, 404, 'E01', 'e'], [1675, 683, 'E01', 'e'], [1840, 1020, 'E01', 'e'],
  [1528, 565, 'M50', 'm'], [1817, 931, 'M50', 'm'], [1749, 1097, 'N81', 'n'], [1324, 1194, 'N81', 'n'],
];
const shieldFill = { r: '#fff', e: '#6a9f43', m: '#3c78c8', n: '#6a9f43' };
const shieldInk = { r: '#333', e: '#fff', m: '#fff', n: '#ffe600' };

const Shield = ({ x, y, text, kind }: { x: number; y: number; text: string; kind: 'r' | 'e' | 'm' | 'n' }) => {
  const w = kind === 'r' ? 52 : 43;
  const h = kind === 'r' ? 23 : 20;
  return (
    <g>
      <rect x={x - w / 2} y={y - h / 2} width={w} height={h} fill={shieldFill[kind]} stroke={kind === 'r' ? '#555' : 'none'} strokeWidth={2} />
      <ShieldText x={x} y={y + 7} $colour={shieldInk[kind]}>{text}</ShieldText>
    </g>
  );
};

const ParkPin = ({ x, y }: { x: number; y: number }) => (
  <g>
    <circle cx={x} cy={y} r={13} fill="#fff" stroke="#a9a596" strokeWidth={1.5} />
    <path d={`M${x},${y - 7}l5,5h-2l4,4h-2l2,3h-5v2h-4v-2h-5l2,-3h-2l4,-4h-2z`} fill="#6aaa10" />
  </g>
);

const TrafficMap = () => (
  <MapDrawing viewBox="1273 21 1187 1246" preserveAspectRatio="xMidYMid slice" role="img" aria-label="Route map">
    <defs>{roadLabels.map((r, i) => <path key={i} id={`road-line-${i}`} d={r.d} />)}</defs>
    <path d={industrial} fill="#dfdbd5" />
    <path d={parks} fill="#cadfaa" />
    <path d={clearings} fill="#e9e5dc" />
    <path d={golf} fill="#c9dcc8" />
    <path d={lakes} fill="#99c6ff" stroke="#99c6ff" strokeWidth={3} strokeLinejoin="round" />
    <circle cx={1516} cy={631} r={5} fill="#cadfaa" />
    <MapLines d={streets} $colour="#d2ccbf" $width={2} />
    <MapLines d={streams} $colour="#8cb8ff" $width={2} />
    <MapLines d={rivers} $colour="#8cb8ff" $width={5} />
    <MapLines d={localRoads} $colour="#d2ccbf" $width={8} />
    <MapLines d={mainRoads} $colour="#d2ccbf" $width={12} />
    <MapLines d={r137} $colour="#d2ccbf" $width={15} />
    <MapLines d={localRoads} $colour="#fff" $width={5} />
    <MapLines d={mainRoads} $colour="#fff" $width={9} />
    <MapLines d={r137} $colour="#fff" $width={12} />
    <circle cx={2383} cy={557} r={7} fill="#d2ccbf" stroke="#fff" strokeWidth={6} />
    <circle cx={2094} cy={399} r={7} fill="#fff" />
    <circle cx={1316} cy={250} r={5} fill="#dfdbd5" stroke="#fff" strokeWidth={4} />
    <MapLines d={slipRoads} $colour="#ffd793" $width={7} />
    <MapLines d={n81} $colour="#e8bd55" $width={17} />
    <MapLines d={interchange} $colour="#e8bd55" $width={9} />
    <MapLines d={n81} $colour="#ffe168" $width={14} />
    <MapLines d={interchange} $colour="#ffe168" $width={6} />
    <MapLines d={motorway} $colour="#f0922a" $width={26} />
    <MapLines d={motorway} $colour="#fb9f27" $width={24} />

    <circle cx={1907} cy={1214} r={11} fill="#fff" stroke="#6470b8" strokeWidth={2} />
    <ShieldText x={1907} y={1221} $colour="#6470b8">11</ShieldText>

    {legs.map((l, i) => (
      <g key={i}>
        <MapLines d={l.d} $colour={legColours[l.kind][0]} $width={20} />
        <MapLines d={l.d} $colour={legColours[l.kind][1]} $width={15} />
      </g>
    ))}
    <circle cx={1999} cy={673} r={9} fill="#00b3fd" stroke="#1c74c9" strokeWidth={2} />
    {stops.map(([x, y]) => <circle key={x} cx={x} cy={y} r={6} fill="#fff" />)}

    {areaLabels.map(([x, y, t, anchor]) => <AreaLabel key={t} x={x} y={y} $anchor={anchor}>{t}</AreaLabel>)}
    {roadLabels.map((r, i) => (
      <RoadLabel key={i} $tint={r.tint} $major={r.major}>
        <textPath href={`#road-line-${i}`}>{r.text}</textPath>
      </RoadLabel>
    ))}
    {shields.map(([x, y, t, k], i) => <Shield key={i} x={x} y={y} text={t} kind={k} />)}

    <ParkPin x={1634} y={595} />
    <ParkPin x={1448} y={959} />
    <ParkPin x={2084} y={1055} />
    <circle cx={1766} cy={969} r={13} fill="#fff" stroke="#a9a596" strokeWidth={1.5} />
    <rect x={1762} y={965} width={9} height={9} fill="#8a5f48" />
    <PlaceLabel x={1634} y={632} $colour="#2c6338" $italic>Tymon Park</PlaceLabel>
    <PlaceLabel x={1448} y={996} $colour="#2c6338" $italic>Bancroft Park</PlaceLabel>
    <PlaceLabel x={2084} y={1034} $colour="#2c6338" $italic>Dodder Valley Park</PlaceLabel>
    <PlaceLabel x={1692} y={547} $colour="#4a6ea5" $italic>Tymon Lake</PlaceLabel>
    <PlaceLabel x={1786} y={963} $colour="#3a3a3a">National Basketball</PlaceLabel>
    <PlaceLabel x={1786} y={991} $colour="#3a3a3a">Arena Tallaght</PlaceLabel>

    <circle cx={1757} cy={784} r={11} fill="#fff" stroke="#fff" strokeWidth={8} />
    <circle cx={1757} cy={784} r={10} fill="#fff" stroke="#333" strokeWidth={5} />
    <circle cx={1622} cy={461} r={11} fill="#fff" stroke="#fff" strokeWidth={8} />
    <circle cx={1622} cy={461} r={11} fill="#fff" stroke="#333" strokeWidth={5} />
    <circle cx={1622} cy={461} r={5} fill="#333" />
    <path d="M1622,460C1620,446 1606,432 1606,418A16,16 0 0 1 1638,418C1638,432 1624,446 1622,460Z" fill="#f4584f" stroke="#b8342c" strokeWidth={1.5} />
    <circle cx={1622} cy={418} r={6} fill="#5c1510" />
    <StopLabel x={1736} y={794}>M50</StopLabel>
    <StopLabel x={1602} y={471}>153-167 Limekiln Rd</StopLabel>
  </MapDrawing>
);

/* ---------- icons ---------- */

const InfoIcon = () => (
  <svg viewBox="0 0 32 32" aria-hidden="true">
    <circle cx="16" cy="16" r="15.5" fill="#2a67b2" />
    <path d="M13 13h5v10h2v2h-7v-2h2v-8h-2zM14 7h4v4h-4z" fill="#fff" />
  </svg>
);

type Turn = 'straight' | 'exit' | 'merge' | 'roundabout';

const Manoeuvre = ({ turn }: { turn: Turn }) => (
  <StepIcon viewBox="0 0 32 32" aria-hidden="true" fill="#383838">
    {turn === 'straight' && <path d="M16 0L23 12H19V31H13V12H9Z" />}
    {turn === 'exit' && (
      <>
        <path d="M22 0h5v17l-5-6z" fill="#999" />
        <path d="M1 4L13 1L12 5C22 8 27 16 27 28H21C21 20 17 14 11 11L9 15Z" />
      </>
    )}
    {turn === 'merge' && (
      <>
        <path d="M16 0L23 12H19V16H13V12H9Z" />
        <path d="M9 32V27C9 21 16 20 16 12C16 20 23 21 23 27V32" fill="none" stroke="#383838" strokeWidth="5.5" />
      </>
    )}
    {turn === 'roundabout' && (
      <>
        <circle cx="18" cy="13" r="9" fill="none" stroke="#383838" strokeWidth="5.5" />
        <path d="M15 22h6v8h-6zM1 13L8 6V3L12 6V11H16V15H11V20Z" />
      </>
    )}
  </StepIcon>
);

/* ---------- route text ---------- */

const steps: { turn: Turn; text: React.ReactNode; note?: string; distance: string }[] = [
  { turn: 'straight', text: <>Head <strong>southeast</strong> on <strong>M50</strong> toward <strong>Exit 11</strong></>, distance: '92 m' },
  { turn: 'exit', text: <>At junction <strong>11</strong>, take the <strong>N81</strong> exit to <strong>Templeogue</strong></>, distance: '800 m' },
  { turn: 'merge', text: <>Merge onto <strong>Tallaght Rd/R137</strong></>, note: 'Continue to follow R137', distance: '500 m' },
  { turn: 'roundabout', text: <>At the roundabout, take the <strong>1st</strong> exit onto <strong>Wellington Ln</strong></>, distance: '850 m' },
  { turn: 'roundabout', text: <>At the roundabout, take the <strong>2nd</strong> exit onto <strong>Wellington Rd</strong></>, distance: '650 m' },
];

export default function App() {
  return (
    <>
      <GlobalStyle />
      <Page>
        <Directions>
          <Title>Drive 4.1 km, 6 min</Title>
          <Waypoint $gap={67}>
            <WaypointMark viewBox="0 0 34 34" aria-hidden="true">
              <circle cx="17" cy="17" r="14.5" fill="none" stroke="#333" strokeWidth="4" />
            </WaypointMark>
            <WaypointName>M50</WaypointName>
            <WaypointCity>Dublin</WaypointCity>
          </Waypoint>

          <SummaryGroup>
            <Toggle aria-label="Hide steps">
              <svg viewBox="0 0 16 20" fill="none" stroke="#aaa" strokeWidth="2.6">
                <path d="M1 2L8 8L15 2M1 11L8 17L15 11" />
              </svg>
            </Toggle>
            <GroupText>
              Take <strong>Exit 11</strong>, <strong>R137</strong>, <strong>Wellington Ln</strong> and <strong>Wellington Rd</strong> to <strong>Limekiln Rd</strong>
            </GroupText>
          </SummaryGroup>
          <Separator>2.9 km / 3 min</Separator>

          <ol>
            {steps.map((s, i) => (
              <React.Fragment key={i}>
                <Step>
                  <Manoeuvre turn={s.turn} />
                  <span>{i + 1}.</span>
                  <div>
                    <p>{s.text}</p>
                    {s.note && <Note $gap={6}><InfoIcon />{s.note}</Note>}
                  </div>
                </Step>
                <Separator as="li" $inner={i < steps.length - 1}>{s.distance}</Separator>
              </React.Fragment>
            ))}
          </ol>

          <Group>
            <TurnIcon viewBox="0 0 28 28" aria-hidden="true">
              <path d="M1 9L12 1V6H27V27H20V13H12V18Z" fill="#383838" />
            </TurnIcon>
            <div>
              <GroupText>Turn <strong>left</strong> onto <strong>Limekiln Rd</strong></GroupText>
              <Note $gap={12}><InfoIcon />Destination will be on the left</Note>
            </div>
          </Group>
          <Separator>1.2 km / 2 min</Separator>

          <Waypoint $gap={27}>
            <WaypointMark viewBox="0 0 34 34" aria-hidden="true">
              <circle cx="17" cy="17" r="14.5" fill="none" stroke="#333" strokeWidth="4" />
              <circle cx="17" cy="17" r="7.5" fill="#333" />
            </WaypointMark>
            <WaypointName>153-167 Limekiln Rd</WaypointName>
            <WaypointCity>Dublin</WaypointCity>
          </Waypoint>
        </Directions>

        <MapPane aria-label="Map">
          <TrafficMap />
          <FullMapButton>
            Full map view
            <svg viewBox="0 0 34 32" aria-hidden="true" fill="#3f88e0">
              <path d="M0 0H12L8.500 3.500L13 9L10 12L4.500 7.500L0 11ZM34 0V11L29.500 7.500L24 12L21 9L25.500 3.500L22 0ZM0 32V21L4.500 24.500L10 20L13 23L8.500 28.500L12 32ZM34 32H22L25.500 28.500L21 23L24 20L29.500 24.500L34 21Z" />
            </svg>
          </FullMapButton>
          <Controls>
            <LocateButton aria-label="Show my location">
              <svg viewBox="0 0 34 34" fill="none">
                <circle cx="17" cy="17" r="11.500" stroke="#ccc" strokeWidth="2" />
                <path d="M17 1V6M17 28V33M1 17H6M28 17H33" stroke="#ccc" strokeWidth="2" />
                <circle cx="17" cy="17" r="7" fill="#666" />
              </svg>
            </LocateButton>
            <ZoomPanel>
              <ZoomButton aria-label="Zoom in">
                <svg viewBox="0 0 24 24"><path d="M9 1h6v8h8v6h-8v8H9v-8H1V9h8z" fill="#6a6a6a" /></svg>
              </ZoomButton>
              <ZoomButton aria-label="Zoom out">
                <svg viewBox="0 0 24 24"><path d="M1 9h22v6H1z" fill="#6a6a6a" /></svg>
              </ZoomButton>
            </ZoomPanel>
          </Controls>
        </MapPane>
      </Page>
    </>
  );
}
